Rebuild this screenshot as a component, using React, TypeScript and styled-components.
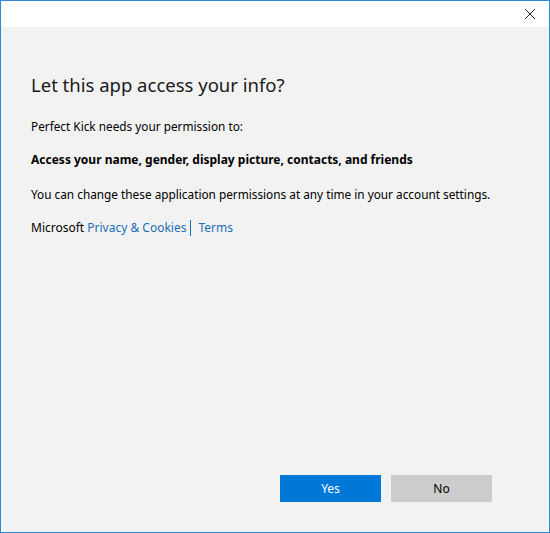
import styled, { createGlobalStyle } from "styled-components";

const GlobalStyle = createGlobalStyle`
  html, body { margin: 0; padding: 0; }
  body {
    font-family: "Segoe UI", "Noto Sans", "Open Sans", sans-serif;
    background: #ffffff;
  }
`;

const Window = styled.div`
  width: 550px;
  height: 533px;
  box-sizing: border-box;
  border: 1px solid #2b8ad4;
  display: flex;
  flex-direction: column;
  background: #f2f2f2;
`;

const TitleBar = styled.div`
  height: 26px;
  background: #ffffff;
  display: flex;
  justify-content: flex-end;
  align-items: center;
  padding-right: 13px;
`;

const Close = styled.button`
  border: none;
  background: none;
  padding: 0;
  width: 12px;
  height: 12px;
  display: flex;
  cursor: pointer;
`;

const Body = styled.div`
  flex: 1;
  display: flex;
  flex-direction: column;
  padding: 44px 30px 30px 30px;
`;

const Heading = styled.h1`
  margin: 0 0 17px;
  font-size: 18.5px;
  font-weight: 400;
  color: #1a1a1a;
  line-height: 28px;
`;

const Text = styled.p<{ bold?: boolean }>`
  margin: 0 0 14px;
  font-size: ${(p) => (p.bold ? "12px" : "11.8px")};
  line-height: 20px;
  color: #000;
  font-weight: ${(p) => (p.bold ? 700 : 400)};
`;

const Links = styled.div`
  display: flex;
  align-items: center;
  font-size: 12px;
  line-height: 20px;
  color: #000;
`;

const Link = styled.a`
  color: #1a6fb8;
  text-decoration: none;
`;

const Divider = styled.span`
  width: 1px;
  height: 16px;
  background: #1a6fb8;
  margin: 0 7px 0 4px;
`;

const Footer = styled.div`
  margin-top: auto;
  display: flex;
  justify-content: flex-end;
  gap: 10px;
  padding-right: 27px;
`;

const Button = styled.button<{ primary?: boolean }>`
  width: 101px;
  height: 27px;
  border: none;
  font-family: inherit;
  font-size: 12px;
  background: ${(p) => (p.primary ? "#0078d7" : "#cccccc")};
  color: ${(p) => (p.primary ? "#ffffff" : "#000000")};
`;

export default function App() {
  return (
    <>
      <GlobalStyle />
      <Window>
        <TitleBar>
          <Close aria-label="Close">
            <svg width="12" height="12" viewBox="0 0 12 12">
              <path d="M1 1L11 11M11 1L1 11" stroke="#222" strokeWidth="1" />
            </svg>
          </Close>
        </TitleBar>
        <Body>
          <Heading>Let this app access your info?</Heading>
          <Text>Perfect Kick needs your permission to:</Text>
          <Text bold>Access your name, gender, display picture, contacts, and friends</Text>
          <Text>You can change these application permissions at any time in your account settings.</Text>
          <Links>
            Microsoft&nbsp;<Link href="#">Privacy &amp; Cookies</Link>
            <Divider />
            <Link href="#">Terms</Link>
          </Links>
          <Footer>
            <Button primary>Yes</Button>
            <Button>No</Button>
          </Footer>
        </Body>
      </Window>
    </>
  );
}
